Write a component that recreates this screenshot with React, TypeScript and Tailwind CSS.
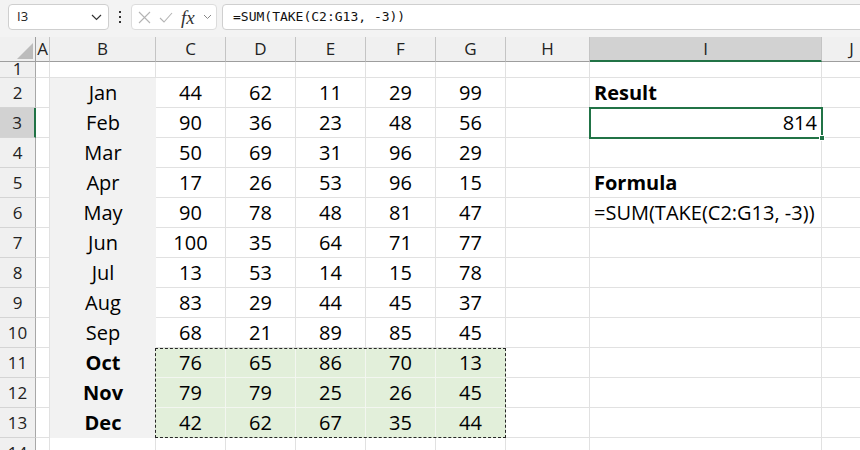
import React from "react";

// ─── Excel sheet: SUM(TAKE(...)) example ─────────────────────────────────────

const rows: [string, number[]][] = [
  ["Jan", [44, 62, 11, 29, 99]],
  ["Feb", [90, 36, 23, 48, 56]],
  ["Mar", [50, 69, 31, 96, 29]],
  ["Apr", [17, 26, 53, 96, 15]],
  ["May", [90, 78, 48, 81, 47]],
  ["Jun", [100, 35, 64, 71, 77]],
  ["Jul", [13, 53, 14, 15, 78]],
  ["Aug", [83, 29, 44, 45, 37]],
  ["Sep", [68, 21, 89, 85, 45]],
];

const lastRows: [string, number[]][] = [
  ["Oct", [76, 65, 86, 70, 13]],
  ["Nov", [79, 79, 25, 26, 45]],
  ["Dec", [42, 62, 67, 35, 44]],
];

const grid = "border-r border-b border-[#e1e1e1]";
const cellFont = "font-['Open_Sans',sans-serif] text-[20px] text-black";
const hdrFont = "font-['Open_Sans',sans-serif] text-[17px] text-[#222]";

function RowHeader({ n, active }: { n: number; active?: boolean }) {
  return (
    <div
      className={`w-[36px] shrink-0 h-full flex items-center justify-center border-b border-[#d4d4d4] ${hdrFont} ${
        active
          ? "bg-[#d2d2d2] border-r-2 border-r-[#217346]"
          : "bg-[#f0f0f0] border-r border-r-[#a8a8a8]"
      }`}
    >
      {n}
    </div>
  );
}

function ICell({ children, bold, right }: { children?: React.ReactNode; bold?: boolean; right?: boolean }) {
  return (
    <div
      className={`w-[232px] shrink-0 h-full flex items-center px-1 ${grid} ${cellFont} ${bold ? "font-bold" : ""} ${
        right ? "justify-end" : ""
      }`}
    >
      {children}
    </div>
  );
}

function RightCells({ n }: { n: number }) {
  let iContent: React.ReactNode = null;
  if (n === 2) iContent = <ICell bold>Result</ICell>;
  else if (n === 3)
    iContent = (
      <div className={`relative w-[232px] shrink-0 h-full flex items-center justify-end px-1 ${grid} ${cellFont}`}>
        814
        <div className="absolute -left-px -top-px w-[234px] h-[32px] border-2 border-[#217346] pointer-events-none" />
        <div className="absolute -right-[4px] -bottom-[4px] w-[6px] h-[6px] bg-[#217346] border border-white" />
      </div>
    );
  else if (n === 5) iContent = <ICell bold>Formula</ICell>;
  else if (n === 6) iContent = <ICell>=SUM(TAKE(C2:G13, -3))</ICell>;
  else iContent = <ICell />;
  return (
    <>
      <div className={`w-[84px] shrink-0 h-full ${grid}`} />
      {iContent}
      <div className={`w-[60px] shrink-0 h-full ${grid}`} />
    </>
  );
}

function DataRow({ n, month, values }: { n: number; month: string; values: number[] }) {
  return (
    <div className="flex h-[30px]">
      <RowHeader n={n} active={n === 3} />
      <div className={`w-[14px] shrink-0 h-full ${grid}`} />
      <div className={`w-[106px] shrink-0 h-full bg-[#f2f2f2] flex items-center justify-center ${cellFont}`}>
        {month}
      </div>
      {values.map((v, i) => (
        <div key={i} className={`w-[70px] shrink-0 h-full flex items-center justify-center ${grid} ${cellFont}`}>
          {v}
        </div>
      ))}
      <RightCells n={n} />
    </div>
  );
}

function EmptyRow({ n, h }: { n: number; h: string }) {
  return (
    <div className={`flex ${h}`}>
      <div className={`w-[36px] shrink-0 h-full flex items-end justify-center overflow-hidden bg-[#f0f0f0] border-r border-r-[#a8a8a8] border-b border-[#d4d4d4] ${hdrFont} leading-[16px]`}>
        {n}
      </div>
      <div className={`w-[14px] shrink-0 h-full ${grid}`} />
      <div className={`w-[106px] shrink-0 h-full ${grid}`} />
      {[0, 1, 2, 3, 4].map((i) => (
        <div key={i} className={`w-[70px] shrink-0 h-full ${grid}`} />
      ))}
      <div className={`w-[84px] shrink-0 h-full ${grid}`} />
      <div className={`w-[232px] shrink-0 h-full ${grid}`} />
      <div className={`w-[60px] shrink-0 h-full ${grid}`} />
    </div>
  );
}

function ColHeader({ label, w, active }: { label: string; w: string; active?: boolean }) {
  return (
    <div
      className={`${w} shrink-0 h-full flex items-center justify-center border-r border-[#c4c4c4] ${hdrFont} ${
        active ? "bg-[#d2d2d2] border-b-2 border-b-[#217346]" : "border-b border-b-[#9e9e9e]"
      }`}
    >
      {label}
    </div>
  );
}

export default function App() {
  return (
    <div className="w-[860px] h-[450px] overflow-hidden bg-white">
      {/* ── Formula bar ── */}
      <div className="h-[37px] bg-[#f3f3f3] flex items-start pt-[4px] pl-[8px] overflow-hidden">
        <div className="w-[101px] h-[26px] bg-white border border-[#cfcfcf] rounded-[4px] flex items-center justify-between pl-[8px] pr-[6px]">
          <span className="font-['Open_Sans',sans-serif] text-[13px] text-[#222]">I3</span>
          <svg width="11" height="7" viewBox="0 0 11 7" fill="none" stroke="#333" strokeWidth="1.2">
            <path d="M1 1l4.5 4.5L10 1" />
          </svg>
        </div>
        <div className="w-[22px] h-[26px] flex flex-col items-center justify-center gap-[3px]">
          <span className="w-[2px] h-[2px] bg-[#333]" />
          <span className="w-[2px] h-[2px] bg-[#333]" />
          <span className="w-[2px] h-[2px] bg-[#333]" />
        </div>
        <div className="w-[86px] h-[26px] bg-white border border-[#dcdcdc] rounded-[4px] flex items-center pl-[6px] gap-[8px]">
          <svg width="13" height="13" viewBox="0 0 13 13" stroke="#b4b4b4" strokeWidth="1.1" fill="none">
            <path d="M1 1l11 11M12 1L1 12" />
          </svg>
          <svg width="14" height="11" viewBox="0 0 14 11" stroke="#b4b4b4" strokeWidth="1.1" fill="none">
            <path d="M1 6l4 4 8-9" />
          </svg>
          <span className="font-['Liberation_Serif',serif] italic text-[19px] text-[#333] leading-none">
            fx
          </span>
          <svg width="9" height="6" viewBox="0 0 9 6" fill="none" stroke="#888" strokeWidth="1">
            <path d="M1 1l3.5 3.5L8 1" />
          </svg>
        </div>
        <div className="ml-[5px] flex-1 -mr-4 h-[26px] bg-white border border-[#cfcfcf] rounded-[4px] flex items-center pl-[10px]">
          <span className="font-['DejaVu_Sans_Mono',monospace] text-[13px] text-[#111]">=SUM(TAKE(C2:G13, -3))</span>
        </div>
      </div>

      {/* ── Column headers ── */}
      <div className="flex h-[25px] bg-[#f0f0f0]">
        <div className="w-[36px] shrink-0 h-full border-r border-b border-[#9e9e9e] flex items-end justify-end p-[2px]">
          <svg width="16" height="16" viewBox="0 0 16 16">
            <path d="M16 0V16H0Z" fill="#bcbcbc" />
          </svg>
        </div>
        <ColHeader label="A" w="w-[14px]" />
        <ColHeader label="B" w="w-[106px]" />
        <ColHeader label="C" w="w-[70px]" />
        <ColHeader label="D" w="w-[70px]" />
        <ColHeader label="E" w="w-[70px]" />
        <ColHeader label="F" w="w-[70px]" />
        <ColHeader label="G" w="w-[70px]" />
        <ColHeader label="H" w="w-[84px]" />
        <ColHeader label="I" w="w-[232px]" active />
        <ColHeader label="J" w="w-[60px]" />
      </div>

      {/* ── Rows 1–10 ── */}
      <EmptyRow n={1} h="h-[16px]" />
      {rows.map(([m, v], i) => (
        <DataRow key={m} n={i + 2} month={m} values={v} />
      ))}

      {/* ── Rows 11–13: copied range with marching ants ── */}
      <div className="flex h-[90px]">
        <div className="flex flex-col">
          {lastRows.map(([m], i) => (
            <div key={m} className="flex h-[30px]">
              <RowHeader n={11 + i} />
              <div className={`w-[14px] shrink-0 h-full ${grid}`} />
              <div className={`w-[105px] shrink-0 h-full bg-[#f2f2f2] flex items-center justify-center pl-px ${cellFont} font-bold`}>
                {m}
              </div>
            </div>
          ))}
        </div>
        <div className="w-[351px] h-[90px] border border-dashed border-[#262626] bg-[#e2efda] grid grid-cols-[70px_70px_70px_70px_69px] grid-rows-[29px_30px_29px]">
          {lastRows.map(([m, v], r) =>
            v.map((x, c) => (
              <div
                key={m + c}
                className={`flex items-center justify-center border-[#f3f6f0] ${c < 4 ? "border-r" : ""} ${
                  r < 2 ? "border-b" : ""
                } ${cellFont}`}
              >
                {x}
              </div>
            ))
          )}
        </div>
        <div className="flex flex-col">
          {[0, 1, 2].map((i) => (
            <div key={i} className="flex h-[30px]">
              <div className={`w-[84px] shrink-0 h-full ${grid}`} />
              <div className={`w-[232px] shrink-0 h-full ${grid}`} />
              <div className={`w-[60px] shrink-0 h-full ${grid}`} />
            </div>
          ))}
        </div>
      </div>

      {/* ── Row 14 (cut off) ── */}
      <div className="flex h-[30px]">
        <div className={`w-[36px] shrink-0 h-full flex items-center justify-center bg-[#f0f0f0] border-r border-r-[#a8a8a8] ${hdrFont}`}>
          14
        </div>
        <div className={`w-[14px] shrink-0 h-full ${grid}`} />
        <div className={`w-[106px] shrink-0 h-full ${grid}`} />
        {[0, 1, 2, 3, 4].map((i) => (
          <div key={i} className={`w-[70px] shrink-0 h-full ${grid}`} />
        ))}
        <div className={`w-[84px] shrink-0 h-full ${grid}`} />
        <div className={`w-[232px] shrink-0 h-full ${grid}`} />
        <div className={`w-[60px] shrink-0 h-full ${grid}`} />
      </div>
    </div>
  );
}
